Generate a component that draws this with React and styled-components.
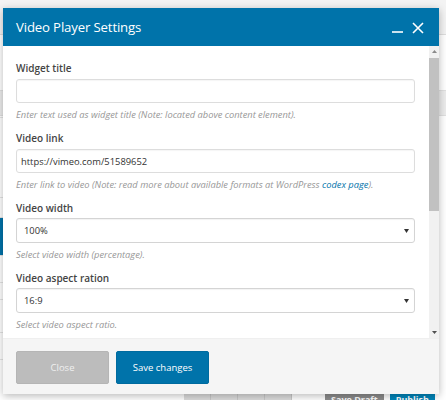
import React from "react";
import styled, { createGlobalStyle } from "styled-components";

const GlobalStyle = createGlobalStyle`
  html, body {
    margin: 0;
    padding: 0;
    background: #f1f1f1;
    font-family: "Open Sans", "Liberation Sans", sans-serif;
  }
  * { box-sizing: border-box; }
`;

// --- page behind the dialog ---
export const Page = styled.div`
  position: relative;
  width: 446px;
  height: 400px;
  overflow: hidden;
  display: grid;
  grid-template-rows: 35px 55px 26px 277px 1fr;
  background: #fff;
`;
export const AdminBar = styled.div`
  background: #f3f3f3;
  border-bottom: 1px solid #dedede;
`;
export const Band = styled.div`
  background: ${p => (p.gray ? "#ececec" : "#fff")};
  border-top: ${p => (p.gray ? "1px solid #e0e0e0" : "none")};
  border-bottom: ${p => (p.gray ? "1px solid #e0e0e0" : "none")};
`;
export const Workspace = styled.div`
  display: flex;
`;
export const SideList = styled.ul`
  list-style: none;
  margin: 0;
  padding: 0;
  width: 110px;
`;
export const SideItem = styled.li`
  height: ${p => p.h}px;
  background: ${p => (p.active ? "#0073aa" : "#fff")};
  border-bottom: 1px solid #e4e4e4;
`;
export const BottomBar = styled.div`
  display: flex;
  align-items: flex-start;
  padding-left: 184px;
  background: #fff;
`;
export const ToolBox = styled.span`
  width: 27px;
  height: 12px;
  background: #dcdcdc;
  border-right: 1px solid #c8c8c8;
`;
export const SmallBtn = styled.span`
  height: 12px;
  padding: 0 6px;
  margin-left: ${p => p.ml || 6}px;
  font-size: 9px;
  font-weight: 700;
  line-height: 12px;
  color: #fff;
  background: ${p => (p.primary ? "#0085ba" : "#8c8c8c")};
  border-top: 1px solid ${p => (p.primary ? "#006799" : "#777")};
`;

// --- dialog ---
export const Modal = styled.section`
  position: absolute;
  top: 8px;
  left: 3px;
  width: 436px;
  height: 386px;
  display: flex;
  flex-direction: column;
  background: #fff;
  box-shadow: 0 2px 8px rgba(0, 0, 0, 0.28);
`;
export const Header = styled.header`
  height: 38px;
  flex: 0 0 38px;
  display: flex;
  align-items: center;
  padding: 0 15px 0 13px;
  background: #0073aa;
  color: #fff;
`;
export const Title = styled.h1`
  flex: 1;
  margin: 0;
  font-size: 13.2px;
  font-weight: 400;
  letter-spacing: -0.15px;
`;
export const HeadIcons = styled.div`
  display: flex;
  gap: 9px;
  align-items: center;
  padding-top: 1px;
`;
export const Body = styled.div`
  flex: 1;
  min-height: 0;
  display: flex;
`;
export const Content = styled.div`
  flex: 1;
  overflow: hidden;
  padding: 14px 14px 14px 13px;
`;
export const ScrollTrack = styled.div`
  width: 10px;
  flex: 0 0 10px;
  display: flex;
  flex-direction: column;
  background: #f1f1f1;
`;
export const ScrollArrow = styled.div`
  height: 11px;
  flex: 0 0 11px;
  display: flex;
  align-items: center;
  justify-content: center;
`;
export const Thumb = styled.div`
  height: 153px;
  margin: 1px 0 0;
  background: #c1c1c1;
`;
export const TrackRest = styled.div`
  flex: 1;
`;
export const Field = styled.div`
  margin-bottom: 8px;
`;
export const Label = styled.label`
  display: block;
  font-size: 10px;
  font-weight: 600;
  line-height: 16px;
  color: #444;
  margin-bottom: ${p => (p.select ? 2 : 3)}px;
`;
export const TextInput = styled.input`
  display: block;
  width: 100%;
  height: 24px;
  margin: 0;
  padding: 0 4px;
  font-family: inherit;
  font-size: 9.4px;
  color: #333;
  background: #fff;
  border: 1px solid #dddddd;
  border-radius: 3px;
  box-shadow: inset 0 1px 1px rgba(0, 0, 0, 0.04);
  outline: none;
`;
export const SelectWrap = styled.div`
  position: relative;
`;
export const Select = styled.select`
  display: block;
  width: 100%;
  height: 25px;
  margin: 0;
  padding: 0 7px;
  font-family: inherit;
  font-size: 9.4px;
  color: #333;
  background: #fff;
  border: 1px solid #d4d4d4;
  border-radius: 3px;
  box-shadow: inset 0 1px 1px rgba(0, 0, 0, 0.05);
  appearance: none;
  outline: none;
`;
export const Caret = styled.svg`
  position: absolute;
  right: 6px;
  top: 11px;
  pointer-events: none;
`;
export const Help = styled.p`
  margin: 5px 0 0;
  font-size: 9.3px;
  font-style: italic;
  line-height: 14px;
  color: #979797;

  a {
    color: #0073aa;
    text-decoration: none;
  }
`;
export const Footer = styled.footer`
  flex: 0 0 56px;
  display: flex;
  gap: 7px;
  padding: 12px 13px 0;
  background: #f5f5f5;
  border-top: 1px solid #efefef;
`;
export const Button = styled.button`
  width: 93px;
  height: 33px;
  font-family: inherit;
  font-size: 9.5px;
  color: ${p => (p.primary ? "#fff" : "#efefef")};
  background: ${p => (p.primary ? "#0073aa" : "#bcbcbc")};
  border: 1px solid ${p => (p.primary ? "#006b9f" : "#b5b5b5")};
  border-radius: 2px;
  cursor: pointer;
`;

const fields = [
  {
    label: "Widget title",
    type: "text",
    value: "",
    help: "Enter text used as widget title (Note: located above content element).",
  },
  {
    label: "Video link",
    type: "text",
    value: "https://vimeo.com/51589652",
    help: (
      <>
        Enter link to video (Note: read more about available formats at WordPress{" "}
        <a href="#codex">codex page</a>).
      </>
    ),
  },
  {
    label: "Video width",
    type: "select",
    value: "100%",
    options: ["100%", "90%", "80%", "70%", "60%", "50%"],
    help: "Select video width (percentage).",
  },
  {
    label: "Video aspect ration",
    type: "select",
    value: "16:9",
    options: ["16:9", "4:3", "2.35:1"],
    help: "Select video aspect ratio.",
  },
  {
    label: "Video alignment",
    type: "select",
    value: "Left",
    options: ["Left", "Right", "Center"],
    help: "Select video alignment.",
  },
  {
    label: "Extra class name",
    type: "text",
    value: "",
    help: "Style particular content element differently - add a class name and refer to it in custom CSS.",
  },
];

const sideRows = [2, 80, 20, 38, 27, 17, 33, 27];

export default function App() {
  return (
    <>
      <GlobalStyle />
      <Page>
        <AdminBar />
        <Band />
        <Band gray />
        <Workspace>
          <SideList>
            {sideRows.map((h, i) => (
              <SideItem key={i} h={h} active={i === 3} />
            ))}
          </SideList>
        </Workspace>
        <BottomBar>
          <ToolBox />
          <ToolBox />
          <ToolBox />
          <ToolBox />
          <SmallBtn ml={33}>Save Draft</SmallBtn>
          <SmallBtn primary>Publish</SmallBtn>
        </BottomBar>

        <Modal>
          <Header>
            <Title>Video Player Settings</Title>
            <HeadIcons>
              <svg width="11" height="11" viewBox="0 0 11 11">
                <line x1="0" y1="10" x2="11" y2="10" stroke="#fff" strokeWidth="1.6" />
              </svg>
              <svg width="12" height="12" viewBox="0 0 12 12">
                <path d="M1 1 L11 11 M11 1 L1 11" stroke="#fff" strokeWidth="1.6" fill="none" />
              </svg>
            </HeadIcons>
          </Header>
          <Body>
            <Content>
              {fields.map((f, i) => (
                <Field key={i}>
                  <Label select={f.type === "select"}>{f.label}</Label>
                  {f.type === "select" ? (
                    <SelectWrap>
                      <Select defaultValue={f.value}>
                        {f.options.map(o => (
                          <option key={o}>{o}</option>
                        ))}
                      </Select>
                      <Caret width="5" height="4" viewBox="0 0 5 4">
                        <path d="M0 0 H5 L2.5 4 Z" fill="#333" />
                      </Caret>
                    </SelectWrap>
                  ) : (
                    <TextInput type="text" defaultValue={f.value} />
                  )}
                  <Help>{f.help}</Help>
                </Field>
              ))}
            </Content>
            <ScrollTrack>
              <ScrollArrow>
                <svg width="5" height="3" viewBox="0 0 5 3">
                  <path d="M0 3 L2.5 0 L5 3 Z" fill="#8a8a8a" />
                </svg>
              </ScrollArrow>
              <Thumb />
              <TrackRest />
              <ScrollArrow>
                <svg width="5" height="3" viewBox="0 0 5 3">
                  <path d="M0 0 H5 L2.5 3 Z" fill="#505050" />
                </svg>
              </ScrollArrow>
            </ScrollTrack>
          </Body>
          <Footer>
            <Button>Close</Button>
            <Button primary>Save changes</Button>
          </Footer>
        </Modal>
      </Page>
    </>
  );
}
